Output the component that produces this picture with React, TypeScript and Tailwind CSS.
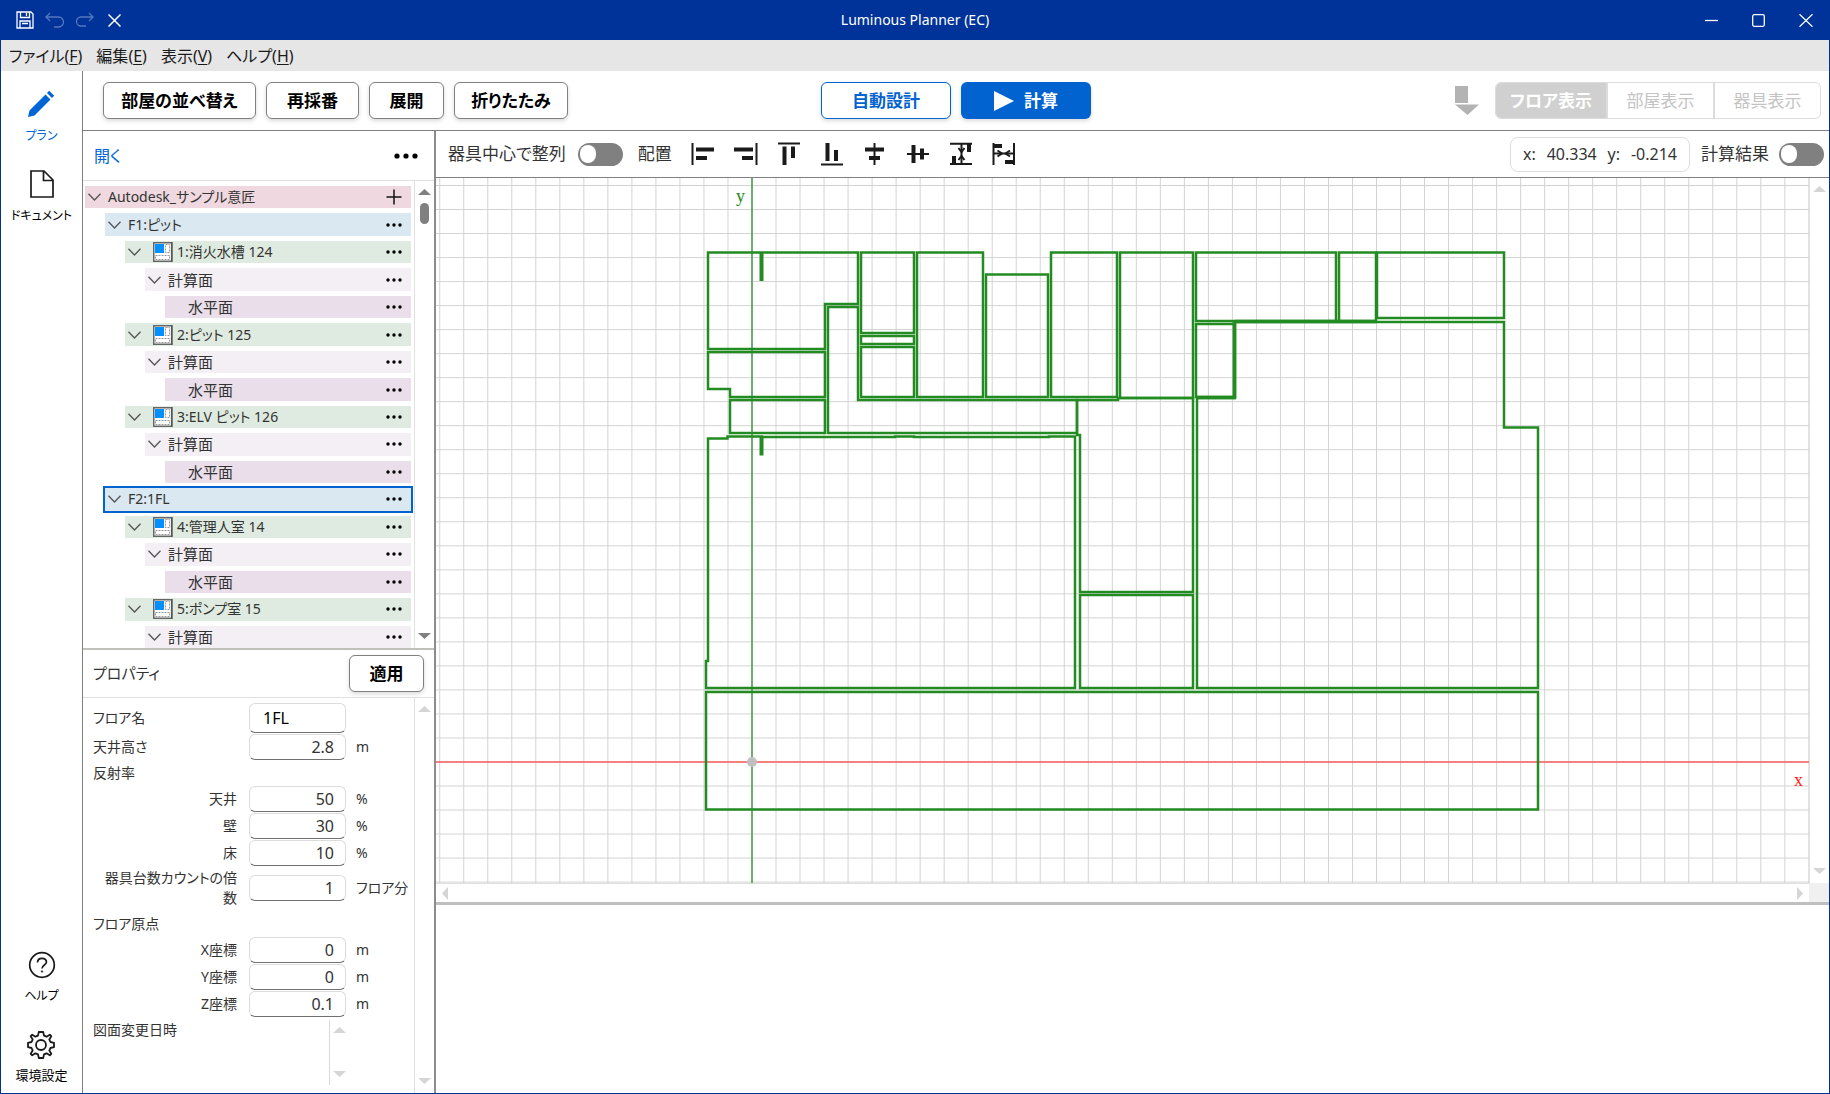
import React from "react";

type Level = "root" | "floor" | "room" | "group" | "plane";

interface TreeItem {
  level: Level;
  label: string;
  selected?: boolean;
}

const rowStyles: Record<Level, string> = {
  root: "ml-[2px] bg-[#efd8df] text-[14px]",
  floor: "ml-[22px] bg-[#d9e8f1] text-[14px]",
  room: "ml-[42px] bg-[#dfebe0] text-[14px]",
  group: "ml-[62px] bg-[#f4eff5] text-[15px]",
  plane: "ml-[82px] bg-[#e9deea] text-[15px]",
};

const treeItems: TreeItem[] = [
  { level: "root", label: "Autodesk_サンプル意匠" },
  { level: "floor", label: "F1:ピット" },
  { level: "room", label: "1:消火水槽 124" },
  { level: "group", label: "計算面" },
  { level: "plane", label: "水平面" },
  { level: "room", label: "2:ピット 125" },
  { level: "group", label: "計算面" },
  { level: "plane", label: "水平面" },
  { level: "room", label: "3:ELV ピット 126" },
  { level: "group", label: "計算面" },
  { level: "plane", label: "水平面" },
  { level: "floor", label: "F2:1FL", selected: true },
  { level: "room", label: "4:管理人室 14" },
  { level: "group", label: "計算面" },
  { level: "plane", label: "水平面" },
  { level: "room", label: "5:ポンプ室 15" },
  { level: "group", label: "計算面" },
];

const rooms: string[] = [
  "M708 252.5H858V304H825V349H708Z",
  "M708 352H825V397H730V389H708Z",
  "M730 400H825V433H730Z",
  "M828 307H858V400H1077V433H828Z",
  "M861 252.5H914V333H861Z",
  "M861 336H914V344H861Z",
  "M861 347H914V397H861Z",
  "M917 252.5H983V397H917Z",
  "M986 274.5H1048V397H986Z",
  "M1051 252.5H1117V397H1051Z",
  "M1120 252.5H1193V398H1120Z",
  "M1196 252.5H1336V321H1196Z",
  "M1339 252.5H1376V321H1339Z",
  "M1377 252.5H1504V318H1377Z",
  "M1196 324H1234V397H1196Z",
  "M1077 400H1118V398H1193V592H1080V435H1077Z",
  "M1235 322H1504V427.5H1538V688H1197V398H1235Z",
  "M708 438.5H727.5V436.5H762V437H895V436.5H914V437H1049V436.5H1075V688H706V661H708Z",
  "M1080 595H1193V688H1080Z",
  "M706 692H1538V809.5H706Z",
];

function Chevron() {
  return (
    <button type="button" aria-label="展開切替" className="flex w-[19px] shrink-0 justify-center">
      <svg width="13" height="8" viewBox="0 0 13 8" fill="none" stroke="#555" strokeWidth="1.3">
        <path d="M.5.8 6.5 7 12.500.8" />
      </svg>
    </button>
  );
}

function Dots({ large = false }: { large?: boolean }) {
  return large ? (
    <svg width="24" height="6" viewBox="0 0 24 6">
      <circle cx="3" cy="3" r="2.600" />
      <circle cx="12" cy="3" r="2.600" />
      <circle cx="21" cy="3" r="2.600" />
    </svg>
  ) : (
    <svg width="16" height="4" viewBox="0 0 16 4">
      <circle cx="2" cy="2" r="1.7" />
      <circle cx="8" cy="2" r="1.7" />
      <circle cx="14" cy="2" r="1.7" />
    </svg>
  );
}

function RoomIcon() {
  return (
    <svg width="20" height="20" viewBox="0 0 20 20" className="ml-[9px] shrink-0">
      <rect x=".75" y=".75" width="18" height="18.500" fill="#fff" stroke="#666" strokeWidth="1.5" />
      <path d="M18.700 0V20" stroke="#555" strokeWidth="1.6" />
      <rect x="2" y="2" width="9" height="9" fill="#0091ff" />
      <path
        d="M12.500 2.500H16.500V10.500H12.500ZM2.500 13.500H16.500V17.500H2.500Z"
        fill="none"
        stroke="#999"
        strokeDasharray="2 1"
      />
    </svg>
  );
}

function Arrow({ dir, dark = false }: { dir: "up" | "down" | "left" | "right"; dark?: boolean }) {
  const fill = dark ? "#808080" : "#d5d5d5";
  const d = {
    up: "M0 9 6.500 3 13 9Z",
    down: "M0 3 6.500 9 13 3Z",
    left: "M9 0 3 6.500 9 13Z",
    right: "M4 0 10 6.500 4 13Z",
  }[dir];
  return (
    <svg width="13" height="13" viewBox="0 0 13 13" className="shrink-0">
      <path d={d} fill={fill} />
    </svg>
  );
}

function ToolButton({ children, width }: { children: React.ReactNode; width: string }) {
  return (
    <button
      type="button"
      className={`h-[37px] shrink-0 rounded-md border border-[#808080] bg-white text-[17px] leading-6 font-bold text-black shadow-[0_2px_4px_rgba(0,0,0,0.15)] ${width}`}
    >
      {children}
    </button>
  );
}

function Toggle({ id }: { id: string }) {
  return (
    <input
      id={id}
      type="checkbox"
      role="switch"
      className="flex h-[23px] w-[45px] shrink-0 appearance-none items-center rounded-full bg-[#808080] px-[2px] before:h-[18px] before:w-[16px] before:rounded-full before:bg-white"
    />
  );
}

const alignIcons: { name: string; art: React.ReactNode }[] = [
  { name: "左揃え", art: <><path d="M1.500 1V23" strokeWidth="2" /><path d="M5 7.500H23M5 16H16" strokeWidth="4" /></> },
  { name: "右揃え", art: <><path d="M22.500 1V23" strokeWidth="2" /><path d="M0 7.500H19M8 16H19" strokeWidth="4" /></> },
  { name: "上揃え", art: <><path d="M1 1.500H23" strokeWidth="2" /><path d="M7.500 4.500V23M16 4.500V16" strokeWidth="4" /></> },
  { name: "下揃え", art: <><path d="M1 22.500H23" strokeWidth="2" /><path d="M7.500 1V19M16 8V19" strokeWidth="4" /></> },
  { name: "左右中央揃え", art: <><path d="M11.500 1V23" strokeWidth="2" /><path d="M2 7.500H21M6 16H17" strokeWidth="4" /></> },
  { name: "上下中央揃え", art: <><path d="M1 12H23" strokeWidth="2" /><path d="M7.500 3V21M16 6.500V17.500" strokeWidth="4" /></> },
  {
    name: "上下等間隔",
    art: <><path d="M1 1.800H23M1 22H23" strokeWidth="2" /><path d="M20 2V10M5 14V22" strokeWidth="4" /><path d="M12.500 2V22" strokeWidth="2" /><path d="M9.500 6 12.500 10 15.500 6M9.500 18 12.500 14 15.500 18" strokeWidth="2" /></>,
  },
  {
    name: "左右等間隔",
    art: <><path d="M1.500 1V23M22 1V23" strokeWidth="2" /><path d="M1 4H10M13 20H22" strokeWidth="4" /><path d="M2 11.500H22" strokeWidth="2" /><path d="M5.500 8.500 10 11.500 5.500 14.500M18 8.500 13.500 11.500 18 14.500" strokeWidth="2" /></>,
  },
];

function Field({
  id,
  label,
  value,
  unit,
  indent = true,
  text = false,
}: {
  id: string;
  label: string;
  value: string;
  unit?: string;
  indent?: boolean;
  text?: boolean;
}) {
  return (
    <div className="flex items-center">
      <label htmlFor={id} className={`w-36 shrink-0 leading-5 ${indent ? "pl-2 text-right" : ""}`}>
        {label}
      </label>
      <input
        id={id}
        defaultValue={value}
        className={`ml-3 w-[97px] shrink-0 rounded-md border border-[#dcdcdc] border-b-[#707070] bg-white text-base leading-6 ${
          text ? "h-[30px] px-[13px] text-black" : "h-[26px] px-[11px] text-right text-[#333]"
        }`}
      />
      {unit && <span className="ml-[10px] leading-5 whitespace-nowrap">{unit}</span>}
    </div>
  );
}

function MenuItem({ label, accessKey }: { label: string; accessKey: string }) {
  return (
    <button type="button" className="leading-6">
      {label}(<span className="underline underline-offset-2">{accessKey}</span>)
    </button>
  );
}

export default function App() {
  return (
    <div
      lang="ja"
      className="flex h-screen flex-col overflow-hidden bg-white font-['Noto_Sans','Noto_Sans_CJK_JP',sans-serif] text-[15px] text-[#333] [font-feature-settings:'palt']"
    >
      <header className="grid h-10 shrink-0 grid-cols-[1fr_auto_1fr] items-center bg-[#003399] text-white">
        <div className="flex items-center pl-4">
          <button type="button" aria-label="保存">
            <svg width="18" height="18" viewBox="0 0 18 18" fill="none" stroke="#fff" strokeWidth="1.3">
              <path d="M1 1H15L17 3V17H1Z M4.500 1V6.500H13.500V1 M10.500 2V5 M4 17V10H14V17 M6 12.500H12" />
            </svg>
          </button>
          <button type="button" aria-label="元に戻す" className="ml-[11px]">
            <svg width="20" height="16" viewBox="0 0 20 16" fill="none" stroke="#5577bd" strokeWidth="1.3">
              <path d="M5 1 1 5 5 9M1 5H13.500A5 5 0 0 1 13.500 15H9" />
            </svg>
          </button>
          <button type="button" aria-label="やり直し" className="ml-[10px]">
            <svg width="20" height="16" viewBox="0 0 20 16" fill="none" stroke="#5577bd" strokeWidth="1.3">
              <path d="M14 1 18 5 14 9M18 5H6A4.500 4.500 0 0 0 6 14H11" />
            </svg>
          </button>
          <button type="button" aria-label="取り消し" className="ml-[13px]">
            <svg width="13" height="13" viewBox="0 0 13 13" stroke="#fff" strokeWidth="1.5">
              <path d="M.5.5 12.500 12.500M12.500.5.5 12.500" />
            </svg>
          </button>
        </div>
        <h1 className="text-sm">Luminous Planner (EC)</h1>
        <div className="flex items-center justify-end gap-[34px] pr-[17px]">
          <button type="button" aria-label="最小化">
            <svg width="13" height="13" viewBox="0 0 13 13" stroke="#fff" strokeWidth="1.300">
              <path d="M0 6.500H13" />
            </svg>
          </button>
          <button type="button" aria-label="最大化">
            <svg width="13" height="13" viewBox="0 0 13 13" fill="none" stroke="#fff" strokeWidth="1.300">
              <rect x=".7" y=".7" width="11.600" height="11.600" rx="1.500" />
            </svg>
          </button>
          <button type="button" aria-label="閉じる">
            <svg width="14" height="13" viewBox="0 0 14 13" stroke="#fff" strokeWidth="1.300">
              <path d="M.5.3 13.500 12.700M13.500.3.5 12.700" />
            </svg>
          </button>
        </div>
      </header>

      <div className="flex min-h-0 flex-1 flex-col border-x border-b border-[#003399]">
        <nav className="flex h-[31px] shrink-0 items-center gap-[14px] bg-[#e6e6e6] pl-2 text-base text-[#1a1a1a]">
          <MenuItem label="ファイル" accessKey="F" />
          <MenuItem label="編集" accessKey="E" />
          <MenuItem label="表示" accessKey="V" />
          <MenuItem label="ヘルプ" accessKey="H" />
        </nav>

        <div className="flex min-h-0 flex-1">
          <aside className="flex w-[82px] shrink-0 flex-col items-center border-r border-[#808080] pt-[19px] pb-2 text-xs leading-5 text-black">
            <button type="button" className="flex flex-col items-center gap-2 text-[#0066d6]">
              <svg width="28" height="28" viewBox="0 0 28 28" fill="#0066d6">
                <path d="M1 27 2.500 20.500 18.500 4.500 23.500 9.500 7.500 25.500ZM20 3 22.200.8 27.200 5.800 25 8Z" />
              </svg>
              プラン
            </button>
            <button type="button" className="mt-6 flex flex-col items-center gap-2">
              <svg width="24" height="28" viewBox="0 0 24 28" fill="none" stroke="#1a1a1a" strokeWidth="1.700">
                <path d="M1 1H14L23 10V27H1ZM13.500 1V10.500H23" />
              </svg>
              ドキュメント
            </button>
            <button type="button" className="mt-auto flex flex-col items-center gap-[7px]">
              <svg width="28" height="28" viewBox="0 0 28 28" fill="none" stroke="#1a1a1a" strokeWidth="1.700">
                <circle cx="14" cy="14" r="12.300" />
                <path d="M9.500 11.500C9.500 6 18.500 6 18.500 11C18.500 14 14 14 14 17.500" />
                <circle cx="14" cy="20.500" r=".8" fill="#1a1a1a" strokeWidth=".6" />
              </svg>
              ヘルプ
            </button>
            <button type="button" className="mt-[25px] flex flex-col items-center gap-[6px] text-[13px] leading-5">
              <svg width="28" height="28" viewBox="0 0 28 28" fill="none" stroke="#1a1a1a" strokeWidth="1.800" strokeLinejoin="round">
                <circle cx="14" cy="14" r="5" />
                <path d="M11.800 1H16.200L17 4.600L19.600 5.700L22.800 3.700L24.300 5.200L22.300 8.400L23.400 11L27 11.800V16.200L23.400 17L22.300 19.600L24.300 22.800L22.800 24.300L19.600 22.300L17 23.400L16.200 27H11.800L11 23.400L8.400 22.300L5.200 24.300L3.700 22.800L5.700 19.600L4.600 17L1 16.200V11.800L4.600 11L5.700 8.400L3.700 5.200L5.200 3.700L8.400 5.700L11 4.600Z" />
              </svg>
              環境設定
            </button>
          </aside>

          <main className="flex min-w-0 flex-1 flex-col">
            <div className="grid h-[60px] shrink-0 grid-cols-[1fr_auto_1fr] items-center border-b border-[#808080] px-2">
              <div className="flex gap-[10px] pl-3">
                <ToolButton width="w-[153px]">部屋の並べ替え</ToolButton>
                <ToolButton width="w-[93px]">再採番</ToolButton>
                <ToolButton width="w-[75px]">展開</ToolButton>
                <ToolButton width="w-[114px]">折りたたみ</ToolButton>
              </div>
              <div className="flex gap-[10px]">
                <button
                  type="button"
                  className="h-[37px] w-[130px] rounded-md border border-[#0063cf] text-[17px] font-bold text-[#0063cf] shadow-[0_2px_4px_rgba(0,0,0,0.15)]"
                >
                  自動設計
                </button>
                <button
                  type="button"
                  className="flex h-[37px] w-[130px] items-center justify-center gap-[10px] rounded-md bg-[#0063cf] text-[17px] font-bold text-white shadow-[0_2px_4px_rgba(0,0,0,0.15)]"
                >
                  <svg width="20" height="20" viewBox="0 0 20 20" fill="#fff">
                    <path d="M0 0 20 10 0 20Z" />
                  </svg>
                  計算
                </button>
              </div>
              <div className="flex items-center justify-end gap-4">
                <svg width="24" height="29" viewBox="0 0 24 29" fill="#b3b3b3" className="shrink-0">
                  <path d="M0 0H13V17H0ZM0 18.500H24L12.500 29Z" />
                </svg>
                <div className="flex h-[37px] w-[326px] divide-x-2 divide-[#dcdcdc] overflow-hidden rounded-md border border-[#dcdcdc] text-[17px] text-[#c4c4c4]">
                  <button type="button" className="w-[112px] bg-[#d0d0d0] font-bold text-white">フロア表示</button>
                  <button type="button" className="flex-1">部屋表示</button>
                  <button type="button" className="flex-1">器具表示</button>
                </div>
              </div>
            </div>

            <div className="flex min-h-0 flex-1">
              <section className="flex w-[353px] shrink-0 flex-col border-r-2 border-[#8c8c8c]">
                <div className="flex h-[50px] shrink-0 items-center justify-between border-b border-[#e0e0e0] pr-4 pl-[11px]">
                  <button type="button" className="text-base text-[#0066d6]">開く</button>
                  <button type="button" aria-label="その他">
                    <Dots large />
                  </button>
                </div>

                <div className="flex min-h-0 flex-1">
                  <ul className="grid min-w-0 flex-1 auto-rows-fr gap-y-[5px] overflow-hidden pt-[5px] pr-[3px]">
                    {treeItems.map((item, i) => (
                      <li
                        key={i}
                        className={`flex min-h-0 items-center pr-[9px] leading-5 ${rowStyles[item.level]} ${
                          item.selected ? "outline-2 outline-[#0063cf]" : ""
                        }`}
                      >
                        {item.level === "plane" ? <span className="w-[19px] shrink-0" /> : <Chevron />}
                        {item.level === "room" && <RoomIcon />}
                        <span className="ml-1 flex-1 whitespace-nowrap">{item.label}</span>
                        <button type="button" aria-label={item.level === "root" ? "追加" : "その他"}>
                          {item.level === "root" ? (
                            <svg width="16" height="16" viewBox="0 0 16 16" stroke="#111" strokeWidth="1.500">
                              <path d="M8 .5V15.500M.5 8H15.500" />
                            </svg>
                          ) : (
                            <Dots />
                          )}
                        </button>
                      </li>
                    ))}
                  </ul>
                  <div className="flex w-5 shrink-0 flex-col items-center border-l border-[#e0e0e0] py-[5px]">
                    <Arrow dir="up" dark />
                    <div className="mt-1 h-[21px] w-[9px] rounded-full bg-[#808080]" />
                    <div className="mt-auto flex">
                      <Arrow dir="down" dark />
                    </div>
                  </div>
                </div>

                <div className="flex h-[445px] shrink-0 flex-col border-t-2 border-[#bfc0bb]">
                  <div className="flex h-[48px] shrink-0 items-center justify-between border-b border-[#e0e0e0] px-[10px]">
                    <h2 className="text-[15px]">プロパティ</h2>
                    <ToolButton width="w-[75px]">適用</ToolButton>
                  </div>
                  <div className="flex min-h-0 flex-1">
                    <form className="flex min-w-0 flex-1 flex-col gap-px overflow-hidden pt-[5px] pl-[10px] text-[14px]">
                      <Field id="floor-name" label="フロア名" value="1FL" indent={false} text />
                      <Field id="ceiling-height" label="天井高さ" value="2.8" unit="m" indent={false} />
                      <p className="h-6 leading-6">反射率</p>
                      <Field id="ref-ceiling" label="天井" value="50" unit="%" />
                      <Field id="ref-wall" label="壁" value="30" unit="%" />
                      <Field id="ref-floor" label="床" value="10" unit="%" />
                      <div className="pt-px pb-[3px]">
                        <Field id="multiplier" label="器具台数カウントの倍数" value="1" unit="フロア分" />
                      </div>
                      <p className="h-6 leading-6">フロア原点</p>
                      <Field id="x" label="X座標" value="0" unit="m" />
                      <Field id="y" label="Y座標" value="0" unit="m" />
                      <Field id="z" label="Z座標" value="0.1" unit="m" />
                      <div className="flex min-h-0 flex-1 pt-[2px] pb-2">
                        <p className="flex-1 leading-5">図面変更日時</p>
                        <div className="mr-[65px] flex w-5 flex-col items-center justify-between border-l border-[#d9d9d9] py-1">
                          <Arrow dir="up" />
                          <Arrow dir="down" />
                        </div>
                      </div>
                    </form>
                    <div className="flex w-5 shrink-0 flex-col items-center justify-between border-l border-[#e0e0e0] py-[5px]">
                      <Arrow dir="up" />
                      <Arrow dir="down" />
                    </div>
                  </div>
                </div>
              </section>

              <section className="flex min-w-0 flex-1 flex-col">
                <div className="flex h-[47px] shrink-0 items-center border-b border-[#808080] pr-[5px] pl-3 text-[17px]">
                  <label htmlFor="center-align" className="whitespace-nowrap">器具中心で整列</label>
                  <span className="ml-3 flex">
                    <Toggle id="center-align" />
                  </span>
                  <span className="ml-[15px]">配置</span>
                  <div className="ml-[19px] flex gap-[19px]">
                    {alignIcons.map((icon) => (
                      <button key={icon.name} type="button" aria-label={icon.name}>
                        <svg width="24" height="24" viewBox="0 0 24 24" fill="none" stroke="#1a1a1a">
                          {icon.art}
                        </svg>
                      </button>
                    ))}
                  </div>
                  <div className="ml-auto flex h-[35px] w-[180px] items-center justify-between rounded-lg border border-[#dedede] px-3 text-base">
                    <span>x:</span>
                    <span>40.334</span>
                    <span>y:</span>
                    <span>-0.214</span>
                  </div>
                  <label htmlFor="results" className="ml-[11px] whitespace-nowrap">計算結果</label>
                  <span className="ml-[10px] flex">
                    <Toggle id="results" />
                  </span>
                </div>

                <div className="grid min-h-0 flex-1 grid-cols-[1fr_20px] grid-rows-[1fr_19px] border-b-[3px] border-[#bfbfbf]">
                  <div className="relative min-h-0 min-w-0 overflow-hidden">
                    <svg className="absolute inset-0 h-full w-full">
                      <g transform="translate(-436 -178)">
                        <defs>
                          <pattern id="grid" x="751.5" y="761.5" width="24.020" height="24.020" patternUnits="userSpaceOnUse">
                            <path d="M.5 0V24.020M0 .5H24.020" stroke="#d2d2d2" />
                          </pattern>
                        </defs>
                        <rect x="435" y="178" width="3000" height="3000" fill="url(#grid)" />
                        <path d="M0 762H3000" stroke="#fa5c5c" strokeWidth="1.600" />
                        <path d="M752 0V3000" stroke="#4f9d54" strokeWidth="1.600" />
                        <g fill="none" stroke="#228b22" strokeWidth="2.500">
                          {rooms.map((d) => (
                            <path key={d} d={d} />
                          ))}
                          <path d="M761.500 252V281M761.500 437V455.500" strokeWidth="4" />
                          <path d="M1234.500 322V398M1196 397.500H1236M1235 321.500H1376" strokeWidth="3.500" />
                        </g>
                        <circle cx="752" cy="762" r="5" fill="#bfbfbf" />
                      </g>
                    </svg>
                    <span className="absolute top-1 left-[300px] font-['Liberation_Serif',serif] text-lg text-[#228b22]">y</span>
                    <span className="absolute top-[588px] right-[6px] font-['Liberation_Serif',serif] text-lg text-[#ff2020]">x</span>
                  </div>
                  <div className="flex flex-col items-center justify-between border-l border-[#e0e0e0] py-[5px]">
                    <Arrow dir="up" />
                    <Arrow dir="down" />
                  </div>
                  <div className="flex items-center justify-between border-t border-[#e0e0e0] px-[3px]">
                    <Arrow dir="left" />
                    <Arrow dir="right" />
                  </div>
                  <div className="bg-[#f0f0f0]" />
                </div>
                <div className="h-[188px] shrink-0" />
              </section>
            </div>
          </main>
        </div>
      </div>
    </div>
  );
}
